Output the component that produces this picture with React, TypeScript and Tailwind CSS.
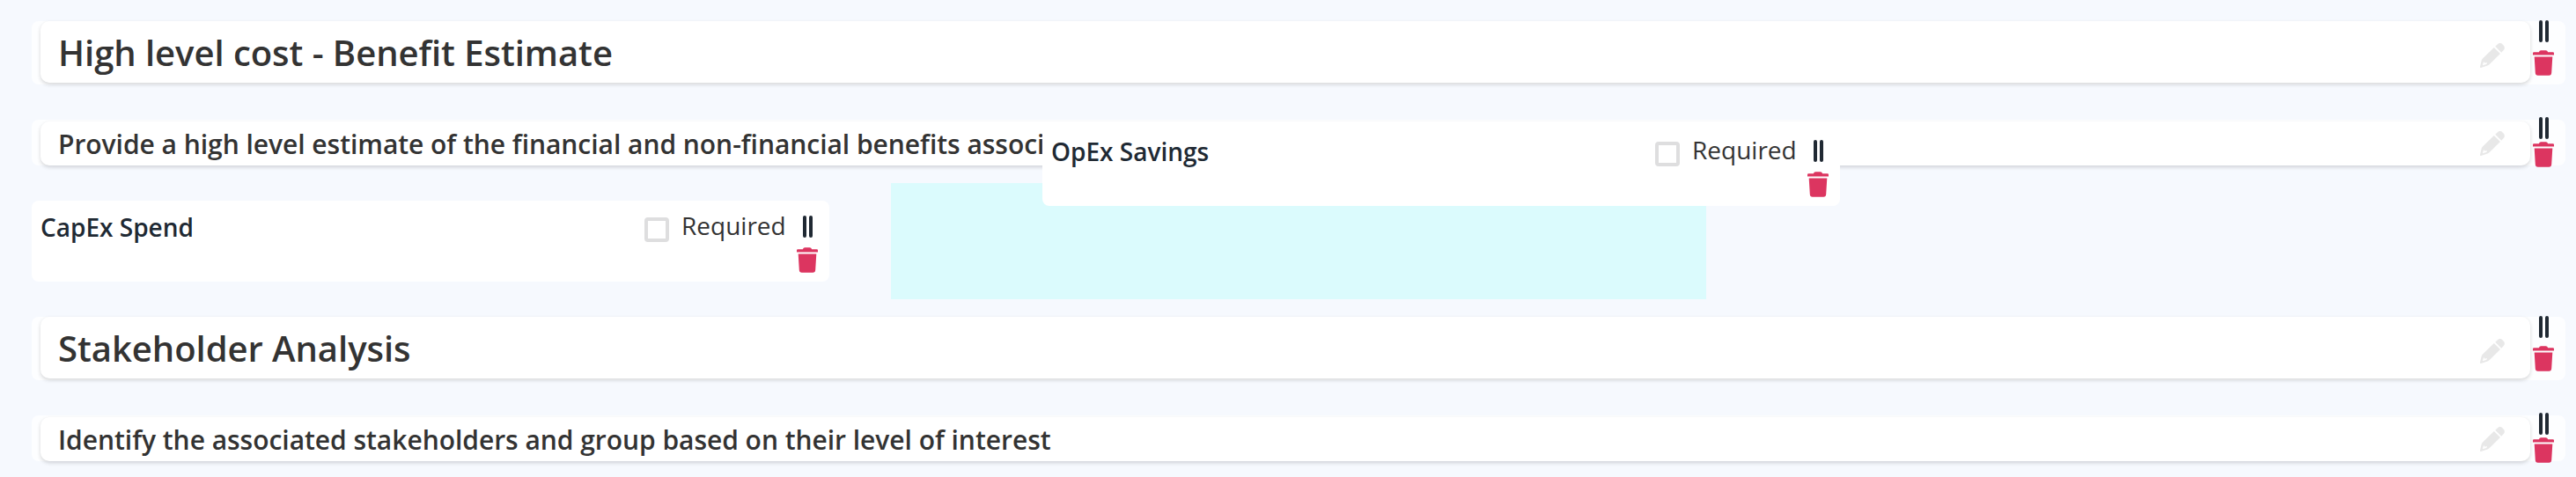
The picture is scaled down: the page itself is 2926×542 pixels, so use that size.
import React from 'react';

const PencilIcon: React.FC = () => (
  <svg className="w-7 h-7 shrink-0 text-[#e8e8e8]" viewBox="0 0 28 28" fill="currentColor">
    <path d="M19.900 1.200a4 4 0 0 1 5.700.2l1 1a4 4 0 0 1 .2 5.700l-2.600 2.600-6.900-6.900z" />
    <path
      fillRule="evenodd"
      d="M15.900 4.900l7.100 7.100L10.800 23.900a8 8 0 0 1-3.700 2.100L1 27.900c-.7.2-1.200-.3-1-1l1.400-6.200a7 7 0 0 1 1.800-3.500zM4.200 20.800l-1.300 4.400 4.300-1.100 1-1.900-3.200.3z"
    />
  </svg>
);

const TrashIcon: React.FC = () => (
  <svg className="w-6 h-[29px] shrink-0 text-[#dc3560]" viewBox="0 0 24 29" fill="currentColor">
    <path d="M1.200 2.300H6.900C7.300 1 8 .3 9.300.3h5.400c1.300 0 2 .7 2.400 2h5.700a1.200 1.200 0 0 1 1.200 1.200V5.400H0V3.500a1.200 1.200 0 0 1 1.200-1.200z" />
    <path d="M1.700 7.500h20.600l-1.100 18.300a3 3 0 0 1-3 2.900H5.800a3 3 0 0 1-3-2.900z" />
  </svg>
);

const DragHandle: React.FC = () => (
  <div className="flex gap-[3px] h-[25px] shrink-0">
    <span className="w-1 rounded-full bg-[#202933]"></span>
    <span className="w-1 rounded-full bg-[#202933]"></span>
  </div>
);

interface HeadingProps {
  title: string;
}

const SectionTitle: React.FC<HeadingProps> = ({ title }) => (
  <div className="flex h-[72px] rounded-lg bg-[#fdfeff]">
    <div className="flex items-center justify-between ml-[10px] w-[2828px] h-[70px] pl-5 pr-[29px] rounded-[10px] bg-white shadow-[0_2px_4px_rgba(34,36,38,0.18)]">
      <h2 className="pt-[2px] text-[40px] leading-[56px] tracking-[-0.04px] font-semibold text-[#333333]">{title}</h2>
      <div className="pt-2">
        <PencilIcon />
      </div>
    </div>
    <div className="flex flex-col items-center gap-[9px] w-[30px] -mt-px">
      <DragHandle />
      <TrashIcon />
    </div>
  </div>
);

const SectionDescription: React.FC<HeadingProps> = ({ title }) => (
  <div className="flex h-[52px] rounded-lg bg-[#fdfeff]">
    <div className="flex items-center justify-between ml-[10px] mt-[2px] w-[2828px] h-[50px] pl-5 pr-[29px] rounded-[10px] bg-white shadow-[0_2px_4px_rgba(34,36,38,0.18)]">
      <h3 className="pt-[2px] text-[30px] leading-[42px] tracking-[-0.035px] font-semibold text-[#333333]">{title}</h3>
      <PencilIcon />
    </div>
    <div className="flex flex-col items-center gap-[3px] w-[30px] -mt-[3px]">
      <DragHandle />
      <TrashIcon />
    </div>
  </div>
);

const FieldCard: React.FC<{ label: string }> = ({ label }) => (
  <div className="flex w-[906px] h-[92px] pl-[10px] pr-[13px] rounded-lg bg-white">
    <p className="grow pt-[10px] text-[28px] leading-10 font-semibold text-[#202933]">{label}</p>
    <label className="flex w-[173px]">
      <span className="mt-[19px] mr-[14px] w-7 h-7 rounded border-4 border-[#dededf] bg-white"></span>
      <span className="pt-2 text-[28px] leading-10 text-[#333333]">Required</span>
    </label>
    <div className="flex flex-col items-center gap-[11px] w-6 pt-[17px]">
      <DragHandle />
      <TrashIcon />
    </div>
  </div>
);

export default function App() {
  return (
    <div
      className="relative w-[2926px] h-[542px] overflow-hidden pl-9 pr-3 pt-6 bg-[#f6f9fe]"
      style={{ fontFamily: '"Open Sans", sans-serif' }}
    >
      <SectionTitle title="High level cost - Benefit Estimate" />
      <div className="mt-10">
        <SectionDescription title="Provide a high level estimate of the financial and non-financial benefits associ" />
      </div>

      {/* Field row with the open drop slot */}
      <div className="flex items-center gap-[70px] mt-5 h-[132px]">
        <FieldCard label="CapEx Spend" />
        <div className="w-[926px] h-full bg-[#dbfbfd]"></div>
      </div>

      <div className="mt-5">
        <SectionTitle title="Stakeholder Analysis" />
      </div>
      <div className="mt-10">
        <SectionDescription title="Identify the associated stakeholders and group based on their level of interest" />
      </div>

      {/* Card being dragged */}
      <div className="absolute left-[1184px] top-[142px]">
        <FieldCard label="OpEx Savings" />
      </div>
    </div>
  );
}
